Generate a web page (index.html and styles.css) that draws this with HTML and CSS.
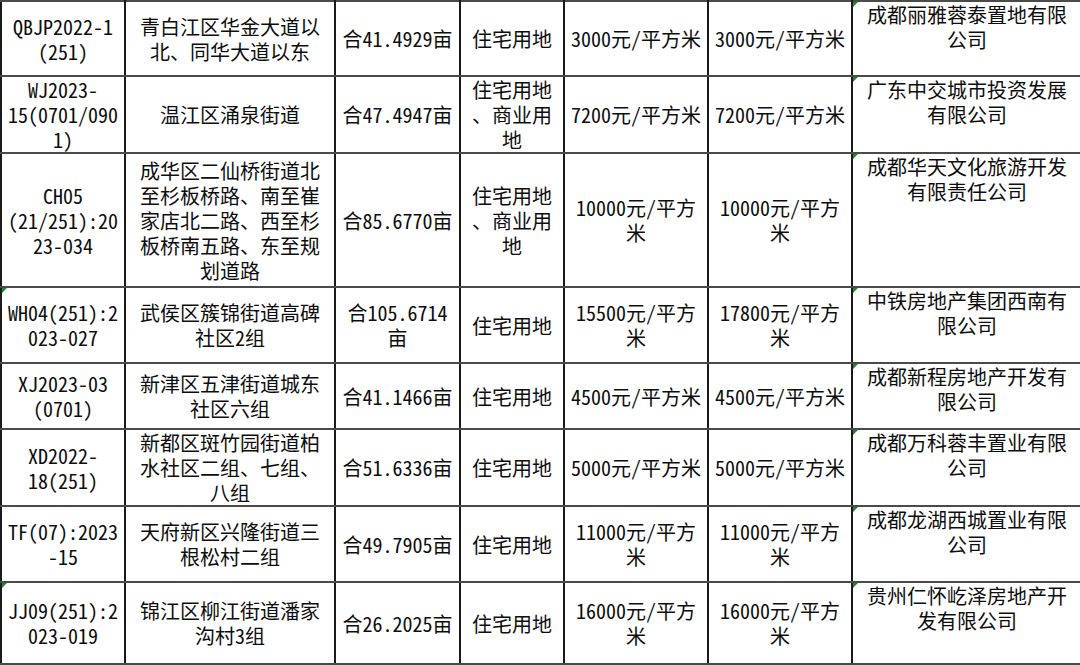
FILE: index.html
```html
<!DOCTYPE html>
<html lang="zh-CN">
<head>
<meta charset="utf-8">
<title>土地出让</title>
<link rel="stylesheet" href="styles.css">
</head>
<body>
<table class="land">
  <colgroup>
    <col class="c-id"><col class="c-loc"><col class="c-area"><col class="c-use"><col class="c-price"><col class="c-price"><col class="c-co">
  </colgroup>
  <tbody>
    <tr class="r1">
      <td>QBJP2022-1<br>(251)</td>
      <td>青白江区华金大道以<br>北、同华大道以东</td>
      <td>合41.4929亩</td>
      <td>住宅用地</td>
      <td>3000元/平方米</td>
      <td>3000元/平方米</td>
      <td class="co flag">成都丽雅蓉泰置地有限<br>公司</td>
    </tr>
    <tr class="r2">
      <td>WJ2023-<br>15(0701/090<br>1)</td>
      <td>温江区涌泉街道</td>
      <td>合47.4947亩</td>
      <td>住宅用地<br>、商业用<br>地</td>
      <td>7200元/平方米</td>
      <td>7200元/平方米</td>
      <td class="co flag">广东中交城市投资发展<br>有限公司</td>
    </tr>
    <tr class="r3">
      <td>CH05<br>(21/251):20<br>23-034</td>
      <td>成华区二仙桥街道北<br>至杉板桥路、南至崔<br>家店北二路、西至杉<br>板桥南五路、东至规<br>划道路</td>
      <td>合85.6770亩</td>
      <td>住宅用地<br>、商业用<br>地</td>
      <td>10000元/平方<br>米</td>
      <td>10000元/平方<br>米</td>
      <td class="co flag">成都华天文化旅游开发<br>有限责任公司</td>
    </tr>
    <tr class="r4">
      <td class="flag">WH04(251):2<br>023-027</td>
      <td>武侯区簇锦街道高碑<br>社区2组</td>
      <td>合105.6714<br>亩</td>
      <td>住宅用地</td>
      <td>15500元/平方<br>米</td>
      <td>17800元/平方<br>米</td>
      <td class="co flag">中铁房地产集团西南有<br>限公司</td>
    </tr>
    <tr class="r5">
      <td>XJ2023-03<br>(0701)</td>
      <td>新津区五津街道城东<br>社区六组</td>
      <td>合41.1466亩</td>
      <td>住宅用地</td>
      <td>4500元/平方米</td>
      <td>4500元/平方米</td>
      <td class="co flag">成都新程房地产开发有<br>限公司</td>
    </tr>
    <tr class="r6">
      <td>XD2022-<br>18(251)</td>
      <td>新都区斑竹园街道柏<br>水社区二组、七组、<br>八组</td>
      <td>合51.6336亩</td>
      <td>住宅用地</td>
      <td>5000元/平方米</td>
      <td>5000元/平方米</td>
      <td class="co flag">成都万科蓉丰置业有限<br>公司</td>
    </tr>
    <tr class="r7">
      <td>TF(07):2023<br>-15</td>
      <td>天府新区兴隆街道三<br>根松村二组</td>
      <td>合49.7905亩</td>
      <td>住宅用地</td>
      <td>11000元/平方<br>米</td>
      <td>11000元/平方<br>米</td>
      <td class="co flag">成都龙湖西城置业有限<br>公司</td>
    </tr>
    <tr class="r8">
      <td class="flag">JJ09(251):2<br>023-019</td>
      <td>锦江区柳江街道潘家<br>沟村3组</td>
      <td>合26.2025亩</td>
      <td>住宅用地</td>
      <td>16000元/平方<br>米</td>
      <td>16000元/平方<br>米</td>
      <td class="co flag">贵州仁怀屹泽房地产开<br>发有限公司</td>
    </tr>
  </tbody>
</table>
</body>
</html>
```
FILE: styles.css
```css
html, body {
  margin: 0;
  padding: 0;
  background: #ffffff;
}

.land {
  border-collapse: collapse;
  table-layout: fixed;
  width: 1081px;
  font-family: "Noto Sans Mono CJK SC", "Noto Sans CJK SC", sans-serif;
  font-size: 20px;
  line-height: 25px;
  color: #0d0d0d;
}

.c-id { width: 124px; }
.c-loc { width: 210px; }
.c-area { width: 125px; }
.c-use { width: 104px; }
.c-price { width: 144px; }
.c-co { width: 230px; }

.land td {
  position: relative;
  padding: 0 2px;
  text-align: center;
  vertical-align: middle;
  white-space: nowrap;
  overflow: hidden;
  border-left: 2px solid #1a1a1a;
  border-right: 2px solid #1a1a1a;
  border-top: 2px solid #4a4a4a;
  border-bottom: 2px solid #4a4a4a;
}

.land td.co {
  vertical-align: top;
}

.flag::before {
  content: "";
  position: absolute;
  left: 0;
  top: 0;
  width: 0;
  height: 0;
  border-top: 5px solid #1e8a2a;
  border-right: 5px solid transparent;
}

.r1 { height: 75px; }
.r2 { height: 76px; }
.r3 { height: 134px; }
.r4 { height: 76px; }
.r5 { height: 66px; }
.r6 { height: 76px; }
.r7 { height: 76px; }
.r8 { height: 82px; }
```
